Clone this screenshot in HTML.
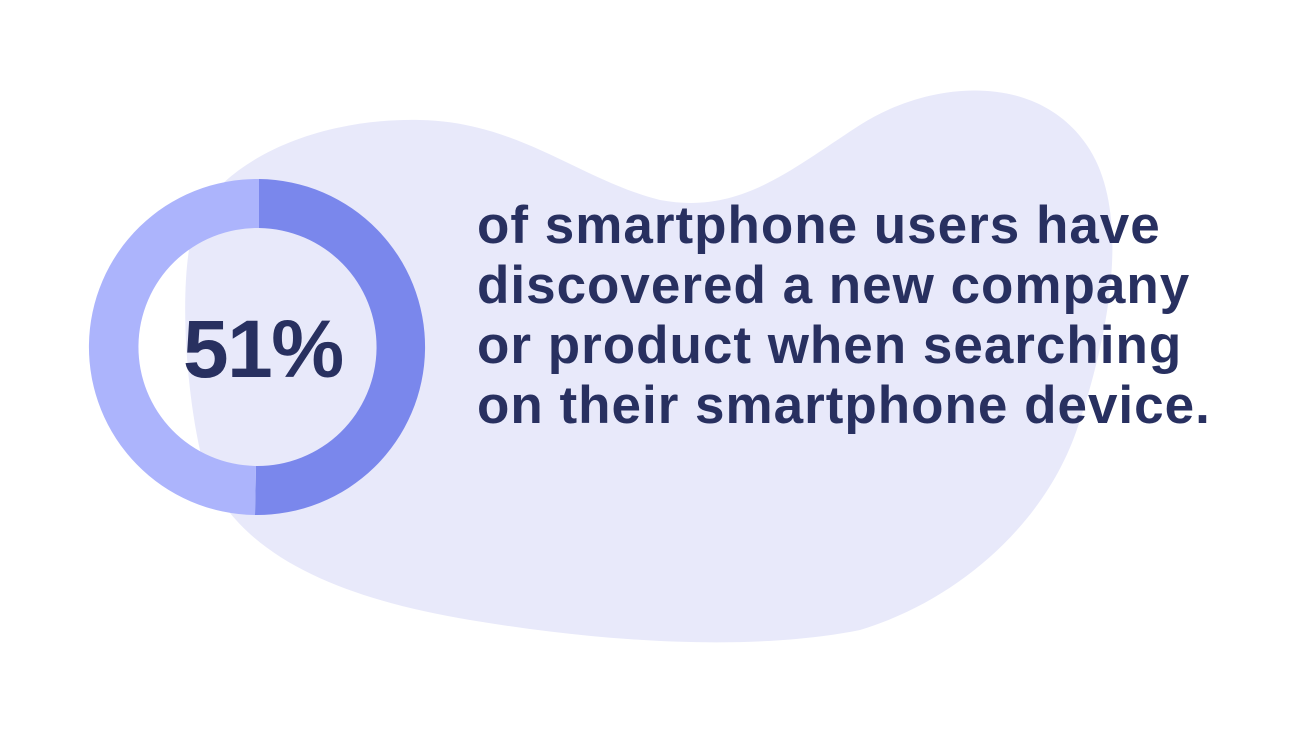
<!DOCTYPE html>
<html><head><style>
html,body{margin:0;padding:0;background:#fff;}
body{width:1316px;height:736px;position:relative;overflow:hidden;font-family:"Liberation Sans",sans-serif;}
svg{position:absolute;left:0;top:0;}
.t{position:absolute;left:477px;top:196px;font-size:53px;font-weight:bold;color:#283060;line-height:60px;letter-spacing:1px;white-space:nowrap;}
</style></head><body>
<svg width="1316" height="736" viewBox="0 0 1316 736">
<path d="M200 210 C240 150 330 118 420 120 C520 122 580 180 660 200 C740 215 790 170 860 125 C930 80 1040 70 1090 150 C1130 215 1110 330 1080 420 C1050 520 960 600 860 630 C760 650 620 645 470 620 C350 600 240 560 205 470 C185 400 175 260 200 210 Z" fill="#e8e9fa"/>
<path d="M259 179 A168 168 0 1 1 255 515 L256 466 A119 119 0 1 0 259 228 Z" fill="#7a87ec"/>
<path d="M259 179 A168 168 0 1 0 255 515 L256 466 A119 119 0 1 1 259 228 Z" fill="#acb4fc"/>
<text x="183" y="377" font-family="Liberation Sans, sans-serif" font-weight="bold" font-size="82" fill="#283060" letter-spacing="-1.5">51%</text>
</svg>
<div class="t">of smartphone users have<br>discovered a new company<br>or product when searching<br>on their smartphone device.</div>
</body></html>
